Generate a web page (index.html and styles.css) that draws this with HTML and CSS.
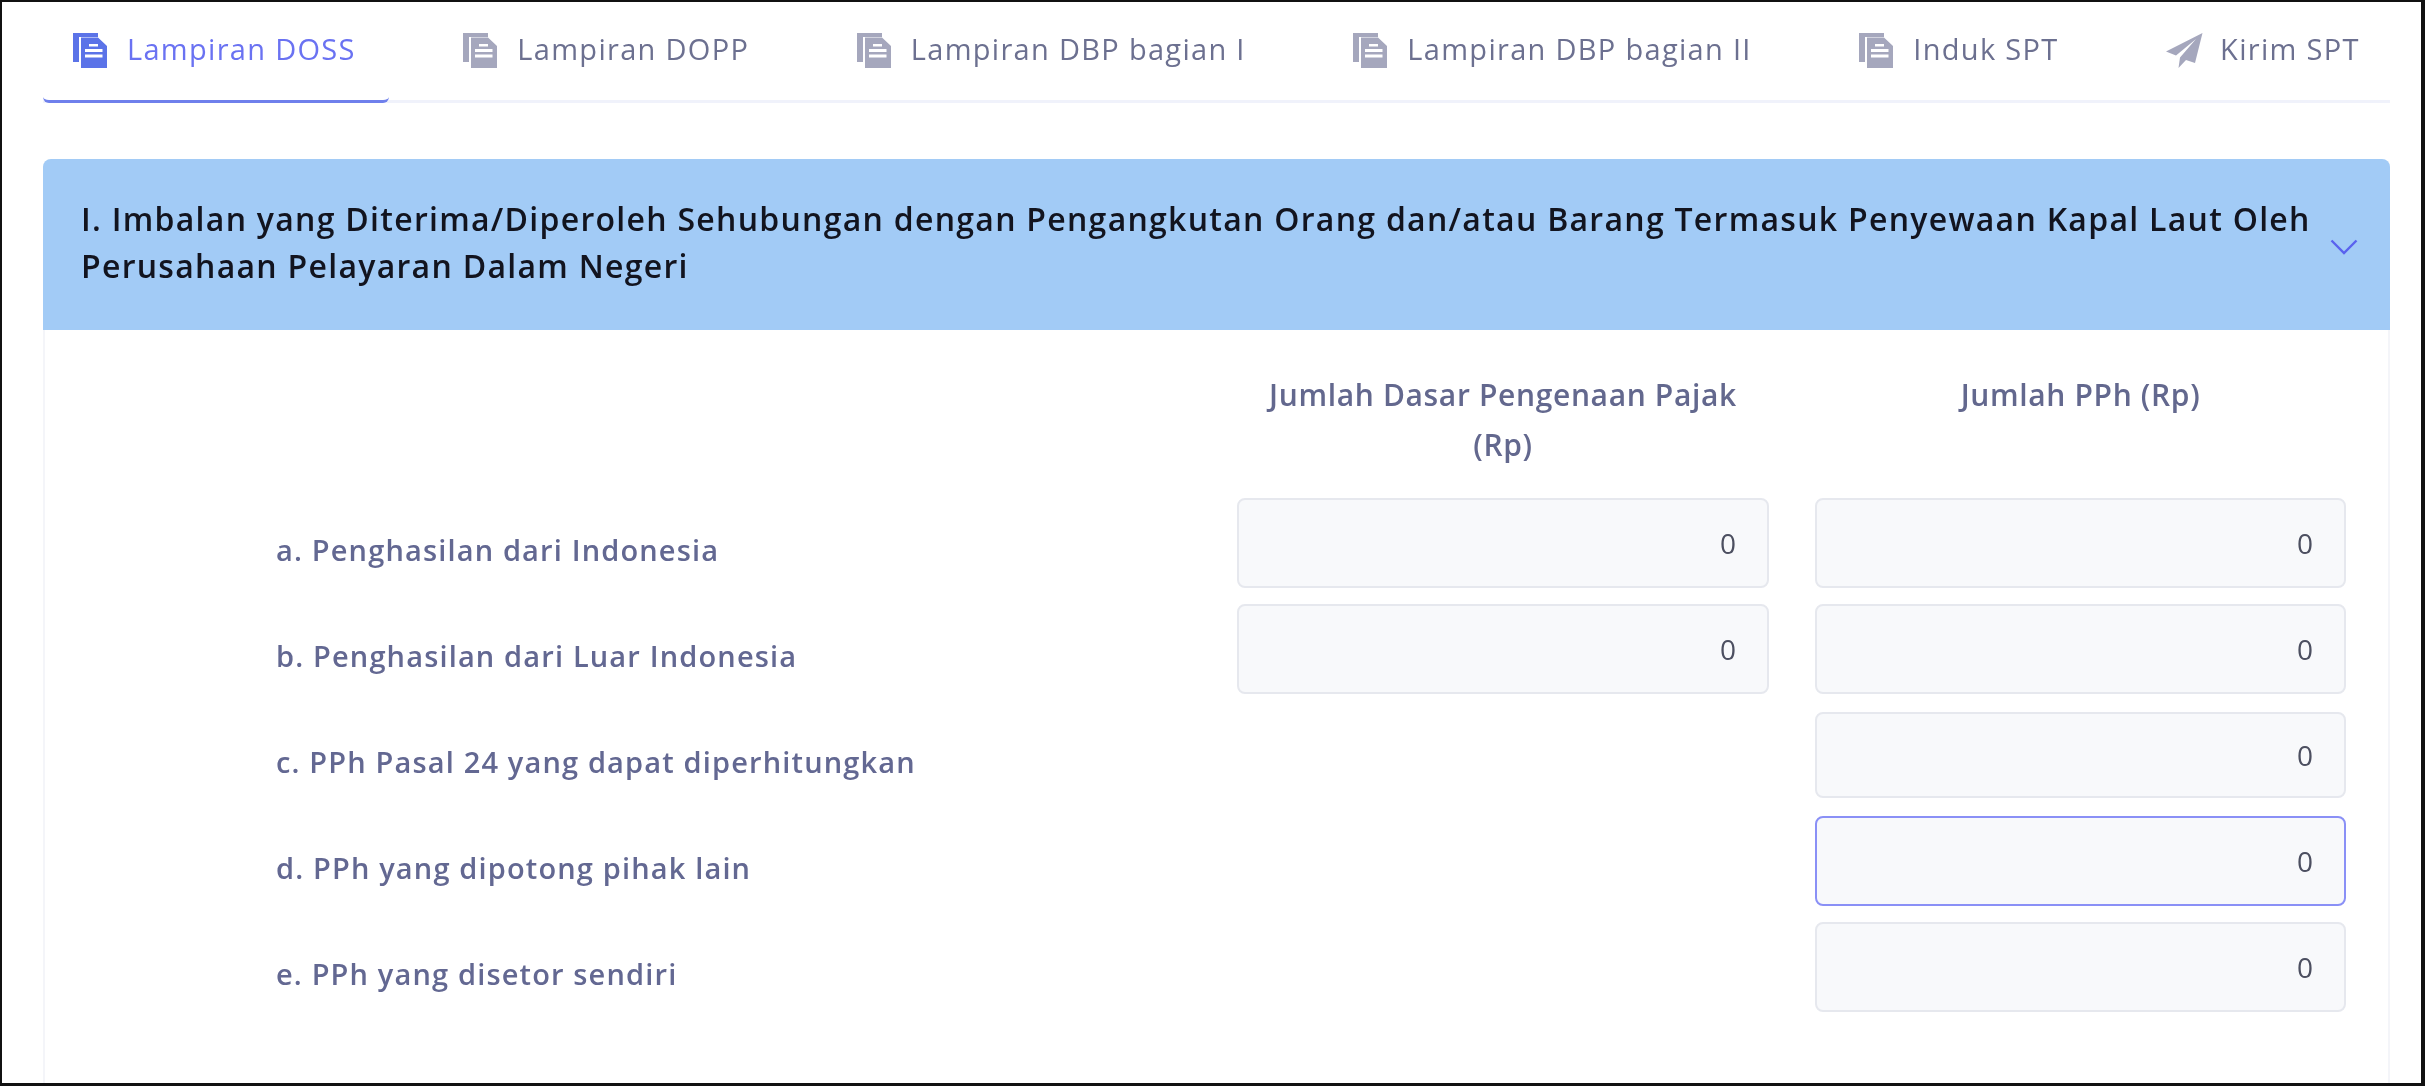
FILE: index.html
```html
<!DOCTYPE html>
<html lang="id">
<head>
<meta charset="utf-8">
<title>Lampiran DOSS</title>
<link rel="stylesheet" href="styles.css">
</head>
<body>
<svg class="defs" width="0" height="0" aria-hidden="true">
  <symbol id="doc" viewBox="0 0 34 35">
    <path d="M0 0H25V4H6V29H0Z"/>
    <path fill-rule="evenodd" d="M8 4.5H25L34 13V35H8ZM16 11V13.5H25V11ZM12 16V19H29.5V16ZM12 21.5V24.5H29.5V21.5Z"/>
  </symbol>
  <symbol id="plane" viewBox="0 0 37 35">
    <path d="M36.5 0 0 18.5 10 22.5 30 6 14 24.5 12.5 35 20 27 29 30Z"/>
  </symbol>
</svg>
<main class="frame">
  <nav class="tabs">
    <a class="tab active"><svg class="ico"><use href="#doc"/></svg><span>Lampiran DOSS</span></a>
    <a class="tab"><svg class="ico"><use href="#doc"/></svg><span>Lampiran DOPP</span></a>
    <a class="tab"><svg class="ico"><use href="#doc"/></svg><span>Lampiran DBP bagian I</span></a>
    <a class="tab"><svg class="ico"><use href="#doc"/></svg><span>Lampiran DBP bagian II</span></a>
    <a class="tab"><svg class="ico"><use href="#doc"/></svg><span>Induk SPT</span></a>
    <a class="tab"><svg class="ico ico-plane"><use href="#plane"/></svg><span>Kirim SPT</span></a>
  </nav>
  <section class="panel">
    <header class="panel-head">
      <h2>I. Imbalan yang Diterima/Diperoleh Sehubungan dengan Pengangkutan Orang dan/atau Barang Termasuk Penyewaan Kapal Laut Oleh Perusahaan Pelayaran Dalam Negeri</h2>
      <svg class="chev" viewBox="0 0 28 16"><path d="M1.5 1.5 14 14 26.5 1.5"/></svg>
    </header>
    <div class="form">
      <div class="corner"></div>
      <div class="col-head">Jumlah Dasar Pengenaan Pajak<br>(Rp)</div>
      <div class="col-head">Jumlah PPh (Rp)</div>

      <div class="label">a. Penghasilan dari Indonesia</div>
      <div class="field">0</div>
      <div class="field">0</div>

      <div class="label">b. Penghasilan dari Luar Indonesia</div>
      <div class="field">0</div>
      <div class="field">0</div>

      <div class="label">c. PPh Pasal 24 yang dapat diperhitungkan</div>
      <div class="field last-col short">0</div>

      <div class="label">d. PPh yang dipotong pihak lain</div>
      <div class="field last-col focus">0</div>

      <div class="label">e. PPh yang disetor sendiri</div>
      <div class="field last-col">0</div>
    </div>
  </section>
</main>
</body>
</html>
```
FILE: styles.css
```css
* { box-sizing: border-box; }
html, body { margin: 0; height: 100%; overflow: hidden; background: #fff; }
.defs { position: absolute; }
.frame {
  height: 1086px;
  border: solid #111;
  border-width: 2px 4px 3px 2px;
  padding: 0 31px 0 41px;
  display: flex;
  flex-direction: column;
  font-family: "Open Sans", sans-serif;
  overflow: hidden;
  filter: blur(0.7px);
}
.tabs {
  display: flex;
  gap: 47.6px;
  height: 101px;
  border-bottom: 3px solid #f0f2fb;
  flex: none;
}
.tab {
  display: flex;
  align-items: flex-start;
  gap: 20px;
  padding: 31px 30px 0;
  margin-bottom: -3px;
  height: 101px;
  color: #6c7090;
  font-size: 29px;
  letter-spacing: 1.3px;
  line-height: 31px;
  white-space: nowrap;
  border-bottom: 3px solid transparent;
  border-radius: 0 0 6px 6px;
}
.tab.active {
  color: #6a72f2;
  border-bottom-color: #6f80ec;
  padding-right: 33px;
  margin-right: -3px;
}
.ico { width: 34px; height: 35px; fill: #a5a7bd; flex: none; }
.active .ico { fill: #5b73e8; }
.ico-plane { width: 37px; margin-right: -3px; }
.panel {
  margin-top: 56px;
  flex: 1;
  border: solid #f4f5f9;
  border-width: 0 2px;
  border-radius: 8px 8px 0 0;
}
.panel-head {
  margin: 0 -2px;
  height: 171px;
  background: #a2cbf6;
  border-radius: 8px 8px 0 0;
  padding: 36px 32px 0 38px;
  display: flex;
  align-items: flex-start;
  gap: 8px;
}
.panel-head h2 {
  margin: 0;
  flex: 1;
  font-size: 32px;
  font-weight: 600;
  line-height: 47px;
  letter-spacing: 1.28px;
  color: #12141f;
}
.chev { width: 28px; height: 16px; margin-top: 44px; flex: none; fill: none; stroke: #5a62ee; stroke-width: 2.4; }
.form {
  display: grid;
  grid-template-columns: 1fr 532px 531px;
  grid-template-rows: 111px;
  grid-auto-rows: 90px;
  column-gap: 46px;
  row-gap: 16px;
  padding: 41px 42px 0 231px;
  align-items: center;
}
.col-head {
  align-self: start;
  margin-top: -1px;
  text-align: center;
  font-size: 30px;
  font-weight: 600;
  line-height: 50px;
  letter-spacing: 0.65px;
  color: #63688e;
}
.label {
  grid-column: 1;
  padding-top: 12px;
  font-size: 29px;
  font-weight: 600;
  letter-spacing: 1.15px;
  color: #636892;
  white-space: nowrap;
}
.field {
  height: 90px;
  background: #f8f9fb;
  border: 2px solid #e6e8ee;
  border-radius: 8px;
  padding-right: 31px;
  text-align: right;
  font-size: 28px;
  line-height: 86px;
  color: #4c4f60;
}
.field.last-col { grid-column: 3; }
.field.short { height: 86px; line-height: 82px; }
.field.focus { border-color: #8a90f6; }
```
